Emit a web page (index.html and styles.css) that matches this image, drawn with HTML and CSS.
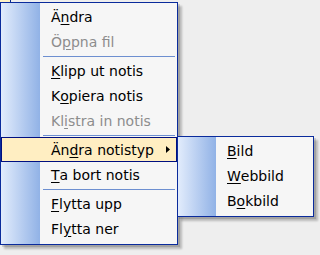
FILE: index.html
```html
<!DOCTYPE html>
<html lang="sv">

<head>
    <meta charset="UTF-8">
    <title>Notismeny</title>
    <link rel="stylesheet" href="styles.css">
</head>

<body>
    <div class="desk">
        <div class="top-strip">
            <div class="cell"></div>
        </div>

        <div class="menu main-menu">
            <div class="item">Ä<u>n</u>dra</div>
            <div class="item disabled">Ö<u>p</u>pna fil</div>
            <div class="sep"><span></span></div>
            <div class="item"><u>K</u>lipp ut notis</div>
            <div class="item">K<u>o</u>piera notis</div>
            <div class="item disabled">Kl<u>i</u>stra in notis</div>
            <div class="sep"><span></span></div>
            <div class="item active">
                Än<u>d</u>ra notistyp
                <svg class="arrow" width="4" height="7" viewBox="0 0 4 7">
                    <path d="M0 0 L4 3.5 L0 7 Z" fill="#000" />
                </svg>
            </div>
            <div class="item"><u>T</u>a bort notis</div>
            <div class="sep"><span></span></div>
            <div class="item"><u>F</u>lytta upp</div>
            <div class="item">Fl<u>y</u>tta ner</div>
        </div>

        <!-- undermeny för Ändra notistyp -->
        <div class="menu sub-menu">
            <div class="item"><u>B</u>ild</div>
            <div class="item"><u>W</u>ebbild</div>
            <div class="item">B<u>o</u>kbild</div>
        </div>
    </div>
</body>

</html>
```

FILE: styles.css
```css
* {
    margin: 0;
    padding: 0;
    box-sizing: border-box;
}

body {
    background: #eeeeee;
    font-family: 'DejaVu Sans', sans-serif;
    font-size: 14px;
    color: #000;
}

.desk {
    position: relative;
    width: 320px;
    height: 255px;
    overflow: hidden;
}

.top-strip {
    height: 2px;
}

.cell {
    width: 11px;
    height: 2px;
    background: #fff2c4;
    border-right: 1px solid #0a2b8c;
}

.menu {
    border: 1px solid #0a2b9c;
    background: linear-gradient(to right, #e2ecfc, #91b2e6) no-repeat 0 0 / 39px 100%, #f6f6f6;
    box-shadow: 2px 2px 0 rgba(0, 0, 0, 0.12), 4px 4px 2px rgba(0, 0, 0, 0.22);
}

.main-menu {
    width: 178px;
    padding: 1px 0 3px;
}

.sub-menu {
    position: absolute;
    left: 177px;
    top: 136px;
    width: 137px;
    padding: 1px 0 3px;
    background-size: 38px 100%;
}

.item {
    height: 25px;
    display: flex;
    align-items: center;
    padding-left: 50px;
    white-space: nowrap;
}

.item u {
    text-decoration: underline;
    text-underline-offset: 2px;
}

.disabled {
    color: #8d8d8d;
}

.active {
    background: #ffeec2;
    border: 1px solid #000f80;
    padding-left: 49px;
    padding-right: 6px;
}

.arrow {
    margin-left: auto;
}

.sub-menu .item {
    padding-left: 49px;
}

.sep {
    height: 4px;
    display: flex;
    align-items: center;
    padding: 0 2px 0 42px;
}

.sep span {
    flex: 1;
    height: 1px;
    background: #6d8fd0;
}
```
